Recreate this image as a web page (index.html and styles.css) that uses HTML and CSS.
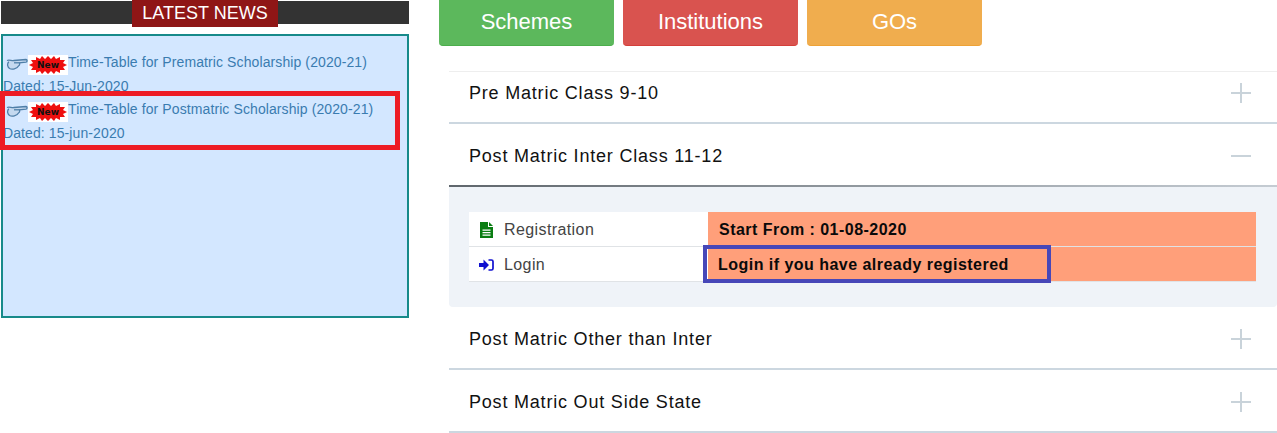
FILE: index.html
```html
<!DOCTYPE html>
<html lang="en">
<head>
  <meta charset="UTF-8" />
  <title>Scholarships</title>
  <link rel="stylesheet" href="styles.css">
</head>
<body>

  <div class="page">
    <aside class="news">
      <div class="news-bar">
        <h2>LATEST NEWS</h2>
      </div>
      <div class="news-box">
        <div class="news-item">
          <p class="news-line">
            <svg class="hand" viewBox="0 0 22 12"><path d="M1 2.5C3 1.5 6 3 8 2.5L20 1.5C21.5 1.6 21.5 4 20 4.2L13.5 4.8C14 6.5 13.5 7.5 12.5 8C11 11 6 11.8 3.5 10.5C1.5 9 .8 6 2.8 3.8" /><path d="M8 4.8L13.5 4.8" /></svg>
            <span class="new-badge">
              <svg viewBox="0 0 40 20"><polygon points="20,1 23,4 26,1 28,4 32,2 32,5 37,5 35,8 39,10 35,12 37,15 32,15 32,18 28,16 26,19 23,16 20,19 17,16 14,19 12,16 8,18 8,15 3,15 5,12 1,10 5,8 3,5 8,5 8,2 12,4 14,1 17,4" /></svg>
              <b>New</b>
            </span>
            <a href="#">Time-Table for Prematric Scholarship (2020-21)</a>
          </p>
          <p class="news-date">Dated: 15-Jun-2020</p>
        </div>
        <div class="news-item">
          <p class="news-line">
            <svg class="hand" viewBox="0 0 22 12"><path d="M1 2.5C3 1.5 6 3 8 2.5L20 1.5C21.5 1.6 21.5 4 20 4.2L13.5 4.8C14 6.5 13.5 7.5 12.5 8C11 11 6 11.8 3.5 10.5C1.5 9 .8 6 2.8 3.8" /><path d="M8 4.8L13.5 4.8" /></svg>
            <span class="new-badge">
              <svg viewBox="0 0 40 20"><polygon points="20,1 23,4 26,1 28,4 32,2 32,5 37,5 35,8 39,10 35,12 37,15 32,15 32,18 28,16 26,19 23,16 20,19 17,16 14,19 12,16 8,18 8,15 3,15 5,12 1,10 5,8 3,5 8,5 8,2 12,4 14,1 17,4" /></svg>
              <b>New</b>
            </span>
            <a href="#">Time-Table for Postmatric Scholarship (2020-21)</a>
          </p>
          <p class="news-date">Dated: 15-jun-2020</p>
        </div>
      </div>
      <div class="mark-red"></div>
    </aside>

    <main class="content">
      <nav class="tabs">
        <a class="tab tab-green" href="#">Schemes</a>
        <a class="tab tab-red" href="#">Institutions</a>
        <a class="tab tab-orange" href="#">GOs</a>
      </nav>

      <section class="accordion">
        <div class="acc-head">
          <span>Pre Matric Class 9-10</span>
          <span class="acc-icon plus"></span>
        </div>
        <div class="acc-head open">
          <span>Post Matric Inter Class 11-12</span>
          <span class="acc-icon minus"></span>
        </div>
        <div class="acc-panel">
          <div class="link-table">
            <div class="link-row">
              <div class="link-name">
                <svg class="icon" viewBox="0 0 15 16"><path fill="#0a7d12" d="M1 0H9V5H14V16H1Z" /><path fill="#0a7d12" d="M10 0L14 4H10Z" /><path fill="#fff" d="M3.5 7.5H11.5V8.7H3.5ZM3.5 10H11.5V11.2H3.5ZM3.5 12.5H11.5V13.7H3.5Z" /></svg>
                <a href="#">Registration</a>
              </div>
              <div class="link-note note-first">Start From : 01-08-2020</div>
            </div>
            <div class="link-row">
              <div class="link-name">
                <svg class="icon" viewBox="0 0 15 16"><path fill="#1010d0" d="M0 6H4.5V2.5L10 8L4.5 13.5V10H0Z" /><path fill="none" stroke="#1010d0" stroke-width="1.7" d="M9.5 3H12.5C13.5 3 14 3.7 14 4.5V11.5C14 12.3 13.5 13 12.5 13H9.5" /></svg>
                <a href="#">Login</a>
              </div>
              <div class="link-note">Login if you have already registered</div>
            </div>
          </div>
          <div class="mark-blue"></div>
        </div>
        <div class="acc-head">
          <span>Post Matric Other than Inter</span>
          <span class="acc-icon plus"></span>
        </div>
        <div class="acc-head">
          <span>Post Matric Out Side State</span>
          <span class="acc-icon plus"></span>
        </div>
      </section>
    </main>
  </div>

</body>
</html>
```

FILE: styles.css
```css
html,
body {
  margin: 0;
  padding: 0;
  height: 433px;
  overflow: hidden;
  background: #fff;
  font-family: 'Liberation Sans', Arial, sans-serif;
}

.page {
  display: flex;
  align-items: flex-start;
}

a {
  text-decoration: none;
}

/* left column */
.news {
  position: relative;
  width: 408px;
  margin-left: 1px;
  flex-shrink: 0;
}

.news-bar {
  display: flex;
  justify-content: center;
  height: 23px;
  margin-top: 1px;
  background: #333;
}

.news-bar h2 {
  height: 27px;
  margin: -1px 0 0;
  padding: 0 10px;
  background: #8f1616;
  color: #fff;
  font-size: 18px;
  font-weight: 400;
  line-height: 27px;
}

.news-box {
  box-sizing: border-box;
  height: 284px;
  margin-top: 10px;
  padding: 14px 0 0 2px;
  background: #d3e7ff;
  border: 2px solid #178a8a;
}

.news-item {
  height: 47px;
  color: #3a7cb0;
  font-size: 14px;
  letter-spacing: 0.1px;
}

.news-line,
.news-date {
  margin: 0;
  line-height: 24px;
  white-space: nowrap;
}

.news-line {
  display: flex;
  align-items: center;
  height: 24px;
  padding-left: 1px;
}

.news-date {
  margin-left: -2px;
}

.news-line a {
  color: #3a7cb0;
}

.hand {
  width: 22px;
  height: 12px;
  margin-top: 4px;
  fill: #c4d9ef;
  stroke: #4f7fa8;
  stroke-width: 1.3;
}

.new-badge {
  position: relative;
  display: inline-flex;
  align-items: center;
  justify-content: center;
  width: 40px;
  height: 20px;
  margin-top: 6px;
  background: #fff;
}

.new-badge svg {
  position: absolute;
  inset: 0;
  fill: #ee0f0f;
}

.new-badge b {
  position: relative;
  color: #111;
  font-family: 'DejaVu Sans', sans-serif;
  font-size: 9px;
  letter-spacing: 0;
}

.mark-red {
  position: absolute;
  left: -1px;
  top: 91px;
  box-sizing: border-box;
  width: 400px;
  height: 59px;
  border: 5px solid #ed1c24;
}

/* right column */
.content {
  flex: 1;
  margin-left: 30px;
}

.tabs {
  display: flex;
  gap: 9px;
}

.tab {
  width: 175px;
  height: 46px;
  box-sizing: border-box;
  border-radius: 0 0 4px 4px;
  color: #fff;
  font-size: 22px;
  line-height: 44px;
  text-align: center;
}

.tab-green {
  background: #5cb85c;
  border-bottom: 1px solid #4cae4c;
}

.tab-red {
  background: #d9534f;
  border-bottom: 1px solid #d43f3a;
}

.tab-orange {
  background: #f0ad4e;
  border-bottom: 1px solid #eea236;
}

.accordion {
  margin-top: 25px;
  margin-left: 10px;
  border-top: 1px solid #eee;
}

.acc-head {
  display: flex;
  align-items: center;
  justify-content: space-between;
  box-sizing: border-box;
  height: 63px;
  padding: 4px 26px 0 20px;
  border-bottom: 2px solid #ccd7e0;
  color: #111;
  font-size: 18px;
  letter-spacing: 0.8px;
}

.acc-head:first-child {
  height: 52px;
  padding-top: 0;
  padding-bottom: 8px;
}

.acc-head.open {
  border-bottom: 2px solid;
  border-image: linear-gradient(to right, #5f666c, #c5ccd3) 1;
}

.acc-icon {
  position: relative;
  width: 20px;
  height: 20px;
  margin-top: -2px;
}

.acc-head:first-child .acc-icon {
  margin-top: 0;
}

.acc-icon::before,
.plus::after {
  content: "";
  position: absolute;
  background: #c9d3da;
}

.acc-icon::before {
  left: 0;
  top: 9px;
  width: 20px;
  height: 2px;
}

.plus::after {
  left: 9px;
  top: 0;
  width: 2px;
  height: 20px;
}

.acc-panel {
  position: relative;
  height: 120px;
  box-sizing: border-box;
  padding: 25px 21px 0 20px;
  background: #eff3f8;
  border-radius: 0 0 4px 4px;
}

.link-row {
  display: grid;
  grid-template-columns: 239px 1fr;
  height: 35px;
  box-sizing: border-box;
  border-bottom: 1px solid #e0e3e6;
  font-size: 16px;
}

.link-name {
  display: flex;
  align-items: center;
  gap: 10px;
  padding: 1px 0 0 10px;
  background: #fff;
  letter-spacing: 0.4px;
}

.link-name a {
  color: #444;
}

.icon {
  width: 15px;
  height: 16px;
}

.link-note {
  padding: 1px 0 0 10px;
  background: #ff9f7a;
  color: #0a0a0a;
  font-size: 16px;
  font-weight: 700;
  letter-spacing: 0.47px;
  line-height: 33px;
}

.note-first {
  padding-left: 11px;
}

.mark-blue {
  position: absolute;
  left: 254px;
  top: 58px;
  box-sizing: border-box;
  width: 348px;
  height: 38px;
  border: 4px solid #4747b8;
}
```
